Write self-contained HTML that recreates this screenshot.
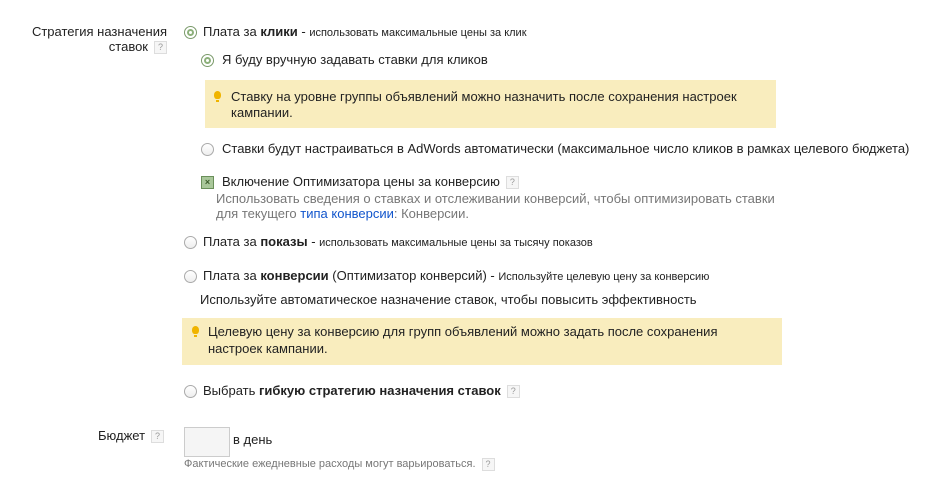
<!DOCTYPE html>
<html><head><meta charset="utf-8"><style>
body{margin:0;width:929px;height:487px;background:#fff;font-family:"Liberation Sans",Arial,sans-serif;font-size:13px;color:#222;position:relative;overflow:hidden}
.a{position:absolute;white-space:nowrap;line-height:16px}
.s{font-size:11px}
.g{color:#777}
.q{display:inline-block;width:11px;height:11px;border:1px solid #ddd;background:#f6f6f6;color:#999;font-size:9px;line-height:11px;text-align:center;vertical-align:middle;margin-left:6px}
.r{position:absolute;width:11px;height:11px;border:1px solid #aaa;border-radius:50%;background:linear-gradient(#fff,#eee)}
.r.on{border-color:#7a9a6a;background:#fff}
.r.on:after{content:"";position:absolute;left:2px;top:2px;width:3px;height:3px;border-radius:50%;border:2px solid #8cb07a;background:#fff}
.y{position:absolute;background:#f9edbe}
.b{position:absolute;width:7px;height:8px;border-radius:50% 50% 40% 40%;background:#f0b400}
.b:after{content:"";position:absolute;left:2px;top:9px;width:3px;height:2px;background:#f0b400}
a{color:#1155cc;text-decoration:none}
</style></head><body>
<div class="a" style="right:762px;top:24px;text-align:right">Стратегия назначения</div>
<div class="a" style="right:762px;top:39px;text-align:right">ставок<span class="q">?</span></div>

<div class="r on" style="left:184px;top:26px"></div>
<div class="a" style="left:203px;top:24px">Плата за <b>клики</b> - <span class="s">использовать максимальные цены за клик</span></div>

<div class="r on" style="left:201px;top:54px"></div>
<div class="a" style="left:222px;top:52px">Я буду вручную задавать ставки для кликов</div>

<div class="y" style="left:205px;top:80px;width:571px;height:48px"></div>
<div class="b" style="left:214px;top:91px"></div>
<div class="a" style="left:231px;top:89px">Ставку на уровне группы объявлений можно назначить после сохранения настроек</div>
<div class="a" style="left:231px;top:105px">кампании.</div>

<div class="r" style="left:201px;top:143px"></div>
<div class="a" style="left:222px;top:141px">Ставки будут настраиваться в AdWords автоматически (максимальное число кликов в рамках целевого бюджета)</div>

<div style="position:absolute;left:201px;top:176px;width:11px;height:11px;border:1px solid #6a8f5a;background:#a9c79a;color:#3a5a2a;font-size:9px;line-height:11px;text-align:center;font-weight:bold">×</div>
<div class="a" style="left:222px;top:174px">Включение Оптимизатора цены за конверсию<span class="q">?</span></div>
<div class="a g" style="left:216px;top:191px">Использовать сведения о ставках и отслеживании конверсий, чтобы оптимизировать ставки</div>
<div class="a g" style="left:216px;top:206px">для текущего <a>типа конверсии</a>: Конверсии.</div>

<div class="r" style="left:184px;top:236px"></div>
<div class="a" style="left:203px;top:234px">Плата за <b>показы</b> - <span class="s">использовать максимальные цены за тысячу показов</span></div>

<div class="r" style="left:184px;top:270px"></div>
<div class="a" style="left:203px;top:268px">Плата за <b>конверсии</b> (Оптимизатор конверсий) - <span class="s">Используйте целевую цену за конверсию</span></div>
<div class="a" style="left:200px;top:292px">Используйте автоматическое назначение ставок, чтобы повысить эффективность</div>

<div class="y" style="left:182px;top:318px;width:600px;height:47px"></div>
<div class="b" style="left:192px;top:326px"></div>
<div class="a" style="left:208px;top:324px">Целевую цену за конверсию для групп объявлений можно задать после сохранения</div>
<div class="a" style="left:208px;top:341px">настроек кампании.</div>

<div class="r" style="left:184px;top:385px"></div>
<div class="a" style="left:203px;top:383px">Выбрать <b>гибкую стратегию назначения ставок</b><span class="q">?</span></div>

<div class="a" style="left:98px;top:428px">Бюджет<span class="q">?</span></div>
<div style="position:absolute;left:184px;top:427px;width:44px;height:28px;border:1px solid #ccc;background:#f5f5f5"></div>
<div class="a" style="left:233px;top:432px">в день</div>
<div class="a s g" style="left:184px;top:456px">Фактические ежедневные расходы могут варьироваться.<span class="q">?</span></div>
</body></html>
